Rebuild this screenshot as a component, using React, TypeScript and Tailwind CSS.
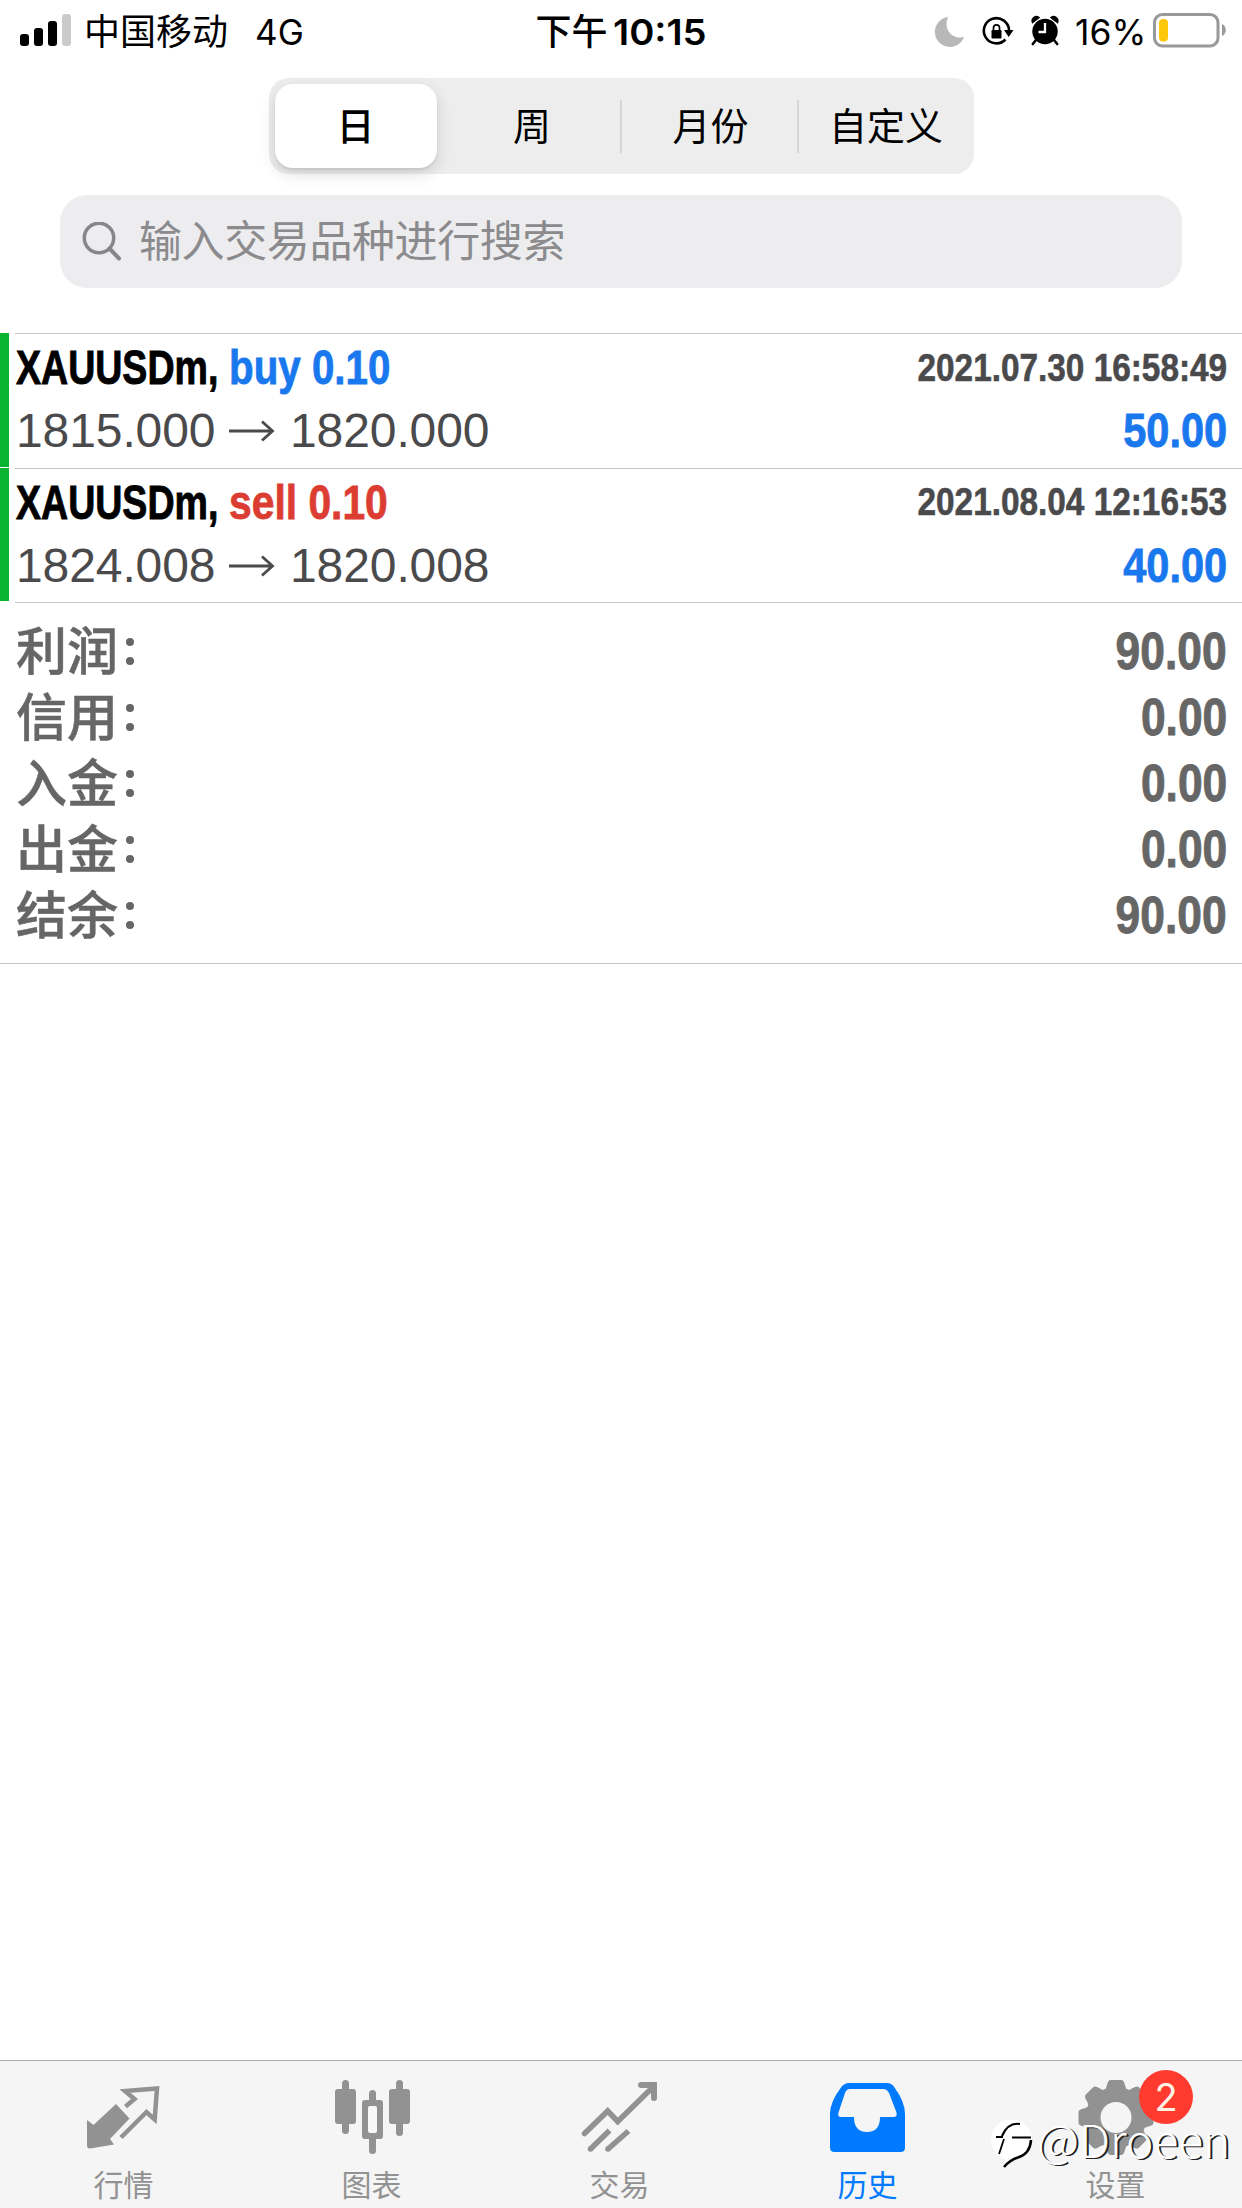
import React from "react";

const cjk = "font-['Inter','Noto_Sans_CJK_SC',sans-serif]";
const helv = "font-['Liberation_Sans',sans-serif]";

type Deal = {
  side: string;
  sideColor: string;
  sideScale: string;
  open: string;
  close: string;
  time: string;
  profit: string;
};

const deals: Deal[] = [
  { side: "buy 0.10", sideColor: "text-[#1a78ee]", sideScale: "scale-x-[.84]", open: "1815.000", close: "1820.000", time: "2021.07.30 16:58:49", profit: "50.00" },
  { side: "sell 0.10", sideColor: "text-[#dc3d32]", sideScale: "scale-x-[.85]", open: "1824.008", close: "1820.008", time: "2021.08.04 12:16:53", profit: "40.00" },
];

const totals = [
  ["利润", "90.00"],
  ["信用", "0.00"],
  ["入金", "0.00"],
  ["出金", "0.00"],
  ["结余", "90.00"],
];

function StatusBar() {
  return (
    <div className="grid h-[64px] grid-cols-3 items-center text-[36px] leading-none whitespace-nowrap text-black">
      <div className="flex h-full items-center pl-5">
        <div className="-mt-1 flex items-end gap-[5px]">
          <i className="h-3 w-[9px] rounded-[3px] bg-black" />
          <i className="h-[18px] w-[9px] rounded-[3px] bg-black" />
          <i className="h-[25px] w-[9px] rounded-[3px] bg-black" />
          <i className="h-8 w-[9px] rounded-[3px] bg-[#cbcbcb]" />
        </div>
        <span className="ml-[13px]">中国移动</span>
        <span className="ml-[27px] text-[35px]">4G</span>
      </div>
      <div className="flex items-center justify-center font-semibold">
        <span className="w-[72px] font-medium">下午</span>
        <span className="ml-[5px] w-[94px] origin-left scale-x-[1.06]">10:15</span>
      </div>
      <div className="flex items-center justify-end pr-[15px]">
        <svg className="-ml-px h-[64px] w-[138px]" viewBox="930 0 138 64">
          <path d="M947 17A15 15 0 1 0 963 37C951 40 942 29 947 17Z" fill="#b8b8b8" />
          <path d="M1004.5 39.5A12.6 12.6 0 1 1 1008 30" fill="none" stroke="#000" strokeWidth="2.6" />
          <path d="M1003 30h9.500l-4.800 7Z" />
          <rect x="990.500" y="30" width="10" height="8.500" rx="1.200" />
          <path d="M992.500 30v-2.200a3 3 0 0 1 6 0v2.200" fill="none" stroke="#000" strokeWidth="1.700" />
          <circle cx="1044" cy="31.500" r="12.700" />
          <path d="M1031.500 22.500c-1.600-4 3-7.500 6.500-5ZM1056.500 22.500c1.600-4-3-7.500-6.500-5Z" stroke="#000" strokeWidth="1.500" />
          <path d="M1035 40l-3.200 4M1053 40l3.200 4" stroke="#000" strokeWidth="2.600" strokeLinecap="round" />
          <path d="M1044 23v9h-6.500" fill="none" stroke="#fff" strokeWidth="2.300" />
        </svg>
        <span className="w-[82px] origin-left scale-x-[1.015] pl-[6px] text-[35px]">16%</span>
        <svg className="h-[64px] w-[76px]" viewBox="1151 0 76 64">
          <rect x="1154.500" y="14.500" width="63.500" height="31.500" rx="8" fill="none" stroke="#999" strokeWidth="3" />
          <rect x="1159" y="19" width="9" height="22.500" rx="4" fill="#fec709" />
          <path d="M1222 24c5 2 5 10 0 12Z" fill="#999" />
        </svg>
      </div>
    </div>
  );
}

function Segments() {
  return (
    <div className="mx-auto mt-[14px] flex h-24 w-[705px] items-center rounded-[20px] bg-[#ededee] text-[38px] leading-none text-black">
      <div className="ml-[6px] flex h-[84px] w-[162px] items-center justify-center rounded-[18px] bg-white font-medium shadow-[0_6px_16px_rgba(0,0,0,.13),0_2px_3px_rgba(0,0,0,.08)]">日</div>
      <div className="flex h-[53px] w-[185px] items-center justify-center border-r-2 border-[#d5d5d7] pl-2">周</div>
      <div className="flex h-[53px] w-[177px] items-center justify-center border-r-2 border-[#d5d5d7] pl-[3px]">月份</div>
      <div className="flex flex-1 items-center justify-center">自定义</div>
    </div>
  );
}

function SearchBox() {
  return (
    <div className="mx-[60px] mt-[21px] flex h-[93px] items-center rounded-[27px] bg-[#ededef] pl-[22px] text-[#8b8b8e]">
      <svg className="h-10 w-10" viewBox="0 0 40 40" fill="none" stroke="#86868a" strokeWidth="3.500" strokeLinecap="round">
        <circle cx="17" cy="16" r="14.700" />
        <path d="M27.500 26.500L37 36.500" strokeWidth="4" />
      </svg>
      <span className="ml-[17px] text-[43px] leading-none tracking-[-.4px]">输入交易品种进行搜索</span>
    </div>
  );
}

function DealRow({ deal }: { deal: Deal }) {
  return (
    <div className={`flex h-[134.500px] ${helv}`}>
      <div className="mb-px w-[9px] bg-[#0bb42f]" />
      <div className="ml-[6px] flex flex-1 flex-col border-t border-[#c4c4c6] pr-[15px]">
        <div className="mt-[6px] flex h-[56px] items-center text-[48px] leading-none font-bold whitespace-nowrap">
          <span className="ml-px w-[213px] origin-left scale-x-[.782] text-black [-webkit-text-stroke:.9px]">XAUUSDm,</span>
          <span className={`w-[200px] origin-left [-webkit-text-stroke:.8px] ${deal.sideScale} ${deal.sideColor}`}>{deal.side}</span>
          <span className="mb-[2px] ml-auto origin-right scale-x-[.855] text-[39px] text-[#4a4a4c] [-webkit-text-stroke:.6px]">{deal.time}</span>
        </div>
        <div className="mt-[7px] flex h-[56px] items-center text-[48px] leading-none whitespace-nowrap text-[#4a4a4c]">
          <span className="ml-px w-[213px] tracking-[-.1px]">{deal.open}</span>
          <svg className="h-6 w-[47px]" viewBox="0 0 47 24" fill="none" stroke="#4a4a4c" strokeWidth="2.800">
            <path d="M0 12H44M33 2.500L43.500 12L33 21.500" />
          </svg>
          <span className="ml-[14px] tracking-[-.1px]">{deal.close}</span>
          <span className="ml-auto origin-right scale-x-[.865] font-bold text-[#1a78ee] [-webkit-text-stroke:.8px]">{deal.profit}</span>
        </div>
      </div>
    </div>
  );
}

function Totals() {
  return (
    <div className="flex h-[361px] flex-col border-b border-[#c4c4c6] pt-[15px] text-[#666]">
      {totals.map(([label, value]) => (
        <div key={label} className="flex h-[66px] items-center pr-[15px] pl-4 leading-none">
          <span className="text-[51px] font-medium [-webkit-text-stroke:.5px]">{label}</span>
          <span className="ml-[8px] flex flex-col gap-[11px]">
            <i className="size-2 rounded-full bg-[#666]" />
            <i className="size-2 rounded-full bg-[#666]" />
          </span>
          <span className={`ml-auto origin-right scale-x-[.87] text-[51px] font-bold [-webkit-text-stroke:.9px] ${helv}`}>{value}</span>
        </div>
      ))}
    </div>
  );
}

function Tab({ label, active, box, children }: { label: string; active?: boolean; box: string; children: React.ReactNode }) {
  return (
    <div className={`flex w-[248px] flex-col items-center pt-[15px] ${active ? "text-[#007aff]" : "text-[#929292]"}`}>
      <svg className="size-20" viewBox={box} fill="currentColor">{children}</svg>
      <span className="mt-[14px] -ml-px text-[30px] leading-none">{label}</span>
    </div>
  );
}

function TabBar() {
  return (
    <div className="relative mt-auto flex h-[148px] border-t border-[#adadad] bg-[#f5f5f5]">
      <Tab label="行情" box="84 2076 80 80">
        <path d="M87 2120l6.500 5L116 2104l13.500 14.500L110 2139l4 5.500L90 2148.500q-3 0-3-3Z" />
        <path d="M125.500 2106.500l9-7.500-9.500-8L157 2088.500l-2.300 31L146.500 2112 121 2137.500" fill="none" stroke="currentColor" strokeWidth="4.500" />
      </Tab>
      <Tab label="图表" box="332 2076 80 80">
        <rect x="335" y="2089" width="21" height="35" rx="3" />
        <rect x="342" y="2080" width="7" height="54" rx="3.500" />
        <rect x="389" y="2089" width="21" height="35" rx="3" />
        <rect x="396" y="2080" width="7" height="56" rx="3.500" />
        <rect x="369" y="2090" width="7" height="64" rx="3.500" />
        <rect x="362" y="2100" width="21" height="39" rx="3" />
        <rect x="368" y="2106" width="9" height="27" rx="2" fill="#f8f8f8" />
      </Tab>
      <Tab label="交易" box="580 2076 80 80">
        <path d="M584.500 2133.500L607.700 2111l10 10.500L654 2086" fill="none" stroke="currentColor" strokeWidth="5.500" strokeLinecap="round" />
        <path d="M641 2085h13v13" fill="none" stroke="currentColor" strokeWidth="6" strokeLinecap="round" />
        <path d="M590.500 2149L609.500 2130.500M608 2149L628.500 2131" fill="none" stroke="currentColor" strokeWidth="5.500" />
        <circle cx="590.500" cy="2149" r="2.800" />
        <circle cx="608" cy="2149" r="2.800" />
      </Tab>
      <Tab label="历史" active box="828 2076 80 80">
        <path d="M849 2083H887q5 0 7.500 4.500Q905 2102 905 2114V2147.500q0 4.500-4.500 4.500H834.500q-4.500 0-4.500-4.500V2114Q830 2102 841 2087.500q3-4.500 8-4.500Z" />
        <path d="M850 2089H883q4 0 6 4L896.500 2112.500q1 4.500-3 4.500H880q0 15-13 15t-13-15H841.500q-4.500 0-3-4.500L845 2093q1.500-4 5-4Z" fill="#f5f5f5" />
      </Tab>
      <Tab label="设置" box="1076.500 2076 80 80">
        <circle cx="1116.500" cy="2117.500" r="30.500" />
        {[0, 45, 90, 135, 180, 225, 270, 315].map((a) => (
          <path key={a} transform={`rotate(${a} 1116.5 2117.5)`} d="M1103.500 2092C1108 2090 1107 2080 1111 2080H1122C1126 2080 1125 2090 1129.500 2092Z" />
        ))}
        <circle cx="1116.500" cy="2117.500" r="15.500" fill="#f5f5f5" />
      </Tab>
      <div className="absolute top-[9px] left-[1139px] flex size-[54px] items-center justify-center rounded-full bg-[#ff3b30] font-['Inter',sans-serif] text-[38px] leading-none text-[#fff3e6]">2</div>
      <div className="absolute top-[55px] left-[989px] flex items-start">
        <svg className="h-[54px] w-[46px]" viewBox="0 0 46 54">
          <circle cx="22.500" cy="24" r="20.500" fill="#fff" />
          <path d="M16 46Q22 46 29 39Q39 36 42 26" fill="#fff" />
          <path d="M13 20Q19 6 31 8" fill="none" stroke="#000" strokeWidth="2.200" />
          <path d="M7 21H14M23 21.500H42M15 23L10 38" fill="none" stroke="#000" strokeWidth="1.800" />
          <path d="M42 24Q41 38 29 41.500Q21 44 15 51" fill="none" stroke="#000" strokeWidth="2.600" />
        </svg>
        <span className="-mt-[4px] ml-[2px] origin-left scale-x-[1.025] font-['Noto_Sans_CJK_SC',sans-serif] text-[45px] leading-[54px] font-light text-white [text-shadow:2px_1px_0_#222]">@Droeen</span>
      </div>
    </div>
  );
}

export default function App() {
  return (
    <div className={`flex h-[2208px] w-[1242px] flex-col overflow-hidden bg-white ${cjk}`}>
      <StatusBar />
      <Segments />
      <SearchBox />
      <div className="mt-[45px]">
        {deals.map((deal) => (
          <DealRow key={deal.time} deal={deal} />
        ))}
        <div className="ml-[15px] h-px bg-[#c4c4c6]" />
      </div>
      <Totals />
      <TabBar />
    </div>
  );
}
